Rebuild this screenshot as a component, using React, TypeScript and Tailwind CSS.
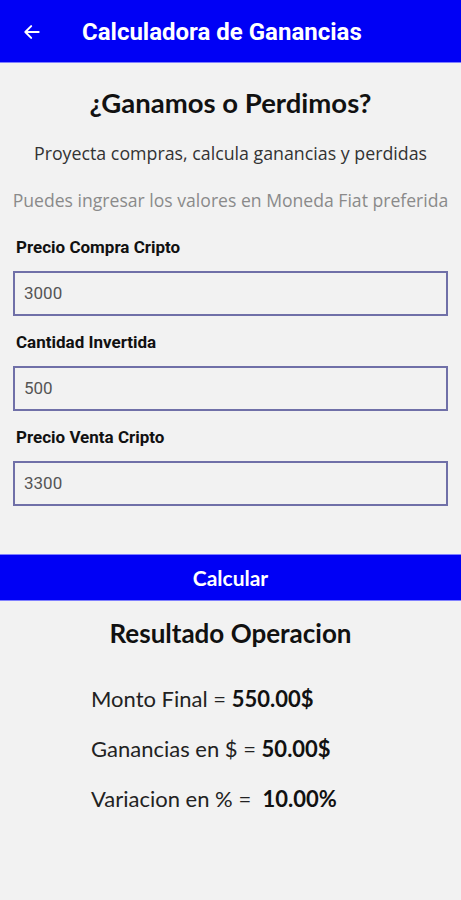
import React from "react";

const Field = ({ label, value }: { label: string; value: string }) => (
  <div className="flex flex-col">
    <div className="h-[24px] pl-[16px] text-[17px] font-bold leading-[24px] text-[#111] [font-family:Roboto,sans-serif]">
      {label}
    </div>
    <div className="mx-[13px] mt-[12px] flex h-[45px] items-center border-2 border-[#7070a8] bg-[#f2f2f2] pl-[9px] text-[17px] text-[#555] [font-family:Roboto,sans-serif]">
      {value}
    </div>
  </div>
);

export default function App() {
  return (
    <div className="flex h-[900px] w-[461px] flex-col bg-[#f2f2f2]">
      <div className="flex h-[63px] items-center border-b border-[#8080ff] bg-[#0000f5] pt-[1px]">
        <svg width="20" height="20" viewBox="0 0 24 24" className="ml-[22px]">
          <path d="M20 12H5M11 5l-7 7 7 7" stroke="white" strokeWidth="2.4" fill="none" strokeLinecap="round" strokeLinejoin="round" />
        </svg>
        <div className="ml-[40px] text-[24px] font-bold text-white [font-family:Roboto,sans-serif]">
          Calculadora de Ganancias
        </div>
      </div>
      <div className="mt-[22px] text-center text-[27.5px] font-bold leading-[36px] text-[#111] [font-family:Lato,sans-serif]">
        ¿Ganamos o Perdimos?
      </div>
      <div className="mt-[20px] text-center text-[17.8px] leading-[24px] text-[#333] [font-family:'Open_Sans',sans-serif]">
        Proyecta compras, calcula ganancias y perdidas
      </div>
      <div className="mt-[23px] whitespace-nowrap text-center text-[17.6px] leading-[24px] text-[#8a8a8a] [font-family:'Open_Sans',sans-serif]">
        Puedes ingresar los valores en Moneda Fiat preferida
      </div>
      <div className="mt-[23px] flex flex-col gap-[14px]">
        <Field label="Precio Compra Cripto" value="3000" />
        <Field label="Cantidad Invertida" value="500" />
        <Field label="Precio Venta Cripto" value="3300" />
      </div>
      <div className="mt-[48px] flex h-[47px] items-center justify-center border-y border-[#8080ff] bg-[#0000f5] text-[21px] font-bold text-white [font-family:Lato,sans-serif]">
        Calcular
      </div>
      <div className="mt-[16px] text-center text-[26px] font-bold leading-[32px] text-[#111] [font-family:Lato,sans-serif]">
        Resultado Operacion
      </div>
      <div className="mt-[35px] flex flex-col gap-[20px] pl-[91px] text-[22px] leading-[30px] text-[#222] [font-family:Lato,sans-serif]">
        <div>
          Monto Final = <span className="font-bold text-[#111]">550.00$</span>
        </div>
        <div>
          Ganancias en $ = <span className="font-bold text-[#111]">50.00$</span>
        </div>
        <div>
          Variacion en % = &nbsp;<span className="font-bold text-[#111]">10.00%</span>
        </div>
      </div>
    </div>
  );
}
